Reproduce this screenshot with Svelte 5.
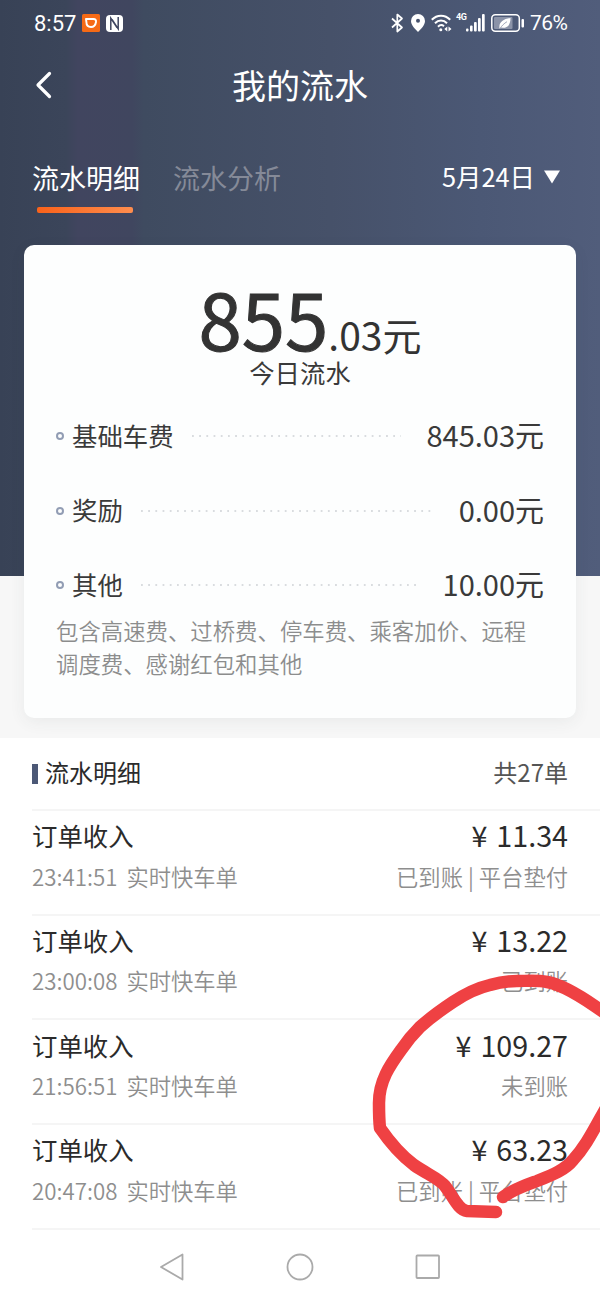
<script>
  const fees = [
    { name: '基础车费', value: '845.03元' },
    { name: '奖励', value: '0.00元' },
    { name: '其他', value: '10.00元' }
  ];

  const orders = [
    { time: '23:41:51', amount: '11.34', status: '已到账 | 平台垫付' },
    { time: '23:00:08', amount: '13.22', status: '已到账' },
    { time: '21:56:51', amount: '109.27', status: '未到账' },
    { time: '20:47:08', amount: '63.23', status: '已到账 | 平台垫付' }
  ];
</script>

<div class="page">
  <div class="hero">
    <div class="statusbar">
      <span class="clock">8:57</span>
      <svg class="didi" width="18" height="18" viewBox="0 0 18 18">
        <rect width="18" height="18" rx="1.5" fill="#f66a16" />
        <path d="M4 5h7.500c2 0 2.800 1.200 2.500 3-.5 3-2.300 5-5 5s-4.600-2-4.600-5z" fill="none" stroke="#fff" stroke-width="1.900" stroke-linejoin="round" />
      </svg>
      <svg class="nfc" width="17" height="17" viewBox="0 0 17 17">
        <rect width="17" height="17" rx="4" fill="#fff" />
        <path d="M4.800 15V3.200L11 12.500M12.200 2v11.800L6 4.500" fill="none" stroke="#3f4560" stroke-width="1.500" />
      </svg>
      <div class="right">
        <svg width="13" height="20" viewBox="0 0 13 20" fill="none" stroke="#fff" stroke-width="1.700" stroke-linejoin="round">
          <path d="M1 5.500l10 9L6.300 18.500V1.500L11 5.500l-10 9" />
        </svg>
        <svg class="pin" width="14" height="18" viewBox="0 0 14 18">
          <path d="M7 0a7 7 0 0 1 7 7c0 4-4 8-7 11C4 15 0 11 0 7a7 7 0 0 1 7-7z" fill="#fff" />
          <circle cx="7" cy="6.700" r="2" fill="#47526d" />
        </svg>
        <svg class="wifi" width="21" height="18" viewBox="0 0 21 18" fill="none" stroke="#fff" stroke-width="2">
          <path d="M.8 5.800c5.200-5.500 13.200-5.500 18.400 0M4 9.300c3.500-3.600 8.500-3.600 12 0M7 12.700c2-2 4.200-2 6-.5" />
          <circle cx="9.800" cy="15.800" r="1.500" fill="#fff" stroke="none" />
          <path d="M16.300 12.500v5l-3-2.500zM17.500 12.500v5l3-2.500z" fill="#fff" stroke="none" />
        </svg>
        <span class="net">4G</span>
        <svg class="signal" width="19" height="18" viewBox="0 0 19 18" fill="#fff">
          <rect x="0" y="14.500" width="2.500" height="3" rx="1" />
          <rect x="4" y="11.500" width="2.600" height="6" rx="1" />
          <rect x="8" y="8" width="2.700" height="9.500" rx="1" />
          <rect x="12" y="4" width="2.700" height="13.500" rx="1" />
          <rect x="16" y="0" width="2.700" height="17.500" rx="1" />
        </svg>
        <svg class="battery" width="34" height="18" viewBox="0 0 34 18">
          <rect x=".8" y=".8" width="27.500" height="16.400" rx="3.500" fill="none" stroke="#fff" stroke-width="1.500" />
          <rect x="3" y="3" width="18.500" height="12" rx="1" fill="#8b93a8" />
          <path d="M8.500 14.500c-1-6 3.500-9.500 11-10.500 0 6-2.500 11-9 9.500z" fill="#fff" />
          <path d="M9 14.500c2-3 4-5 7-6.800" fill="none" stroke="#8b93a8" stroke-width=".8" />
          <rect x="30.500" y="5" width="2.500" height="8.500" rx="1" fill="#fff" />
        </svg>
        <span class="percent">76%</span>
      </div>
    </div>

    <header>
      <svg class="back" width="18" height="28" viewBox="0 0 18 28">
        <path d="M15.500 2.500L4 14l11.500 11.500" fill="none" stroke="#fff" stroke-width="3.200" stroke-linecap="round" stroke-linejoin="round" />
      </svg>
      <h1>我的流水</h1>
    </header>

    <nav class="tabs">
      <div class="tab active">流水明细</div>
      <div class="tab">流水分析</div>
      <div class="date">
        <span>5月24日</span>
        <svg width="18" height="14" viewBox="0 0 18 14"><path d="M1 .5h16L9 13.500z" fill="#fff" /></svg>
      </div>
    </nav>

    <section class="card">
      <div class="total"><span class="big">855</span><span class="small">.03元</span></div>
      <div class="caption">今日流水</div>
      {#each fees as fee}
        <div class="fee">
          <i class="ring"></i>
          <span class="fee-name">{fee.name}</span>
          <span class="dots"></span>
          <span class="fee-value">{fee.value}</span>
        </div>
      {/each}
      <p>包含高速费、过桥费、停车费、乘客加价、远程<br />调度费、感谢红包和其他</p>
    </section>
  </div>

  <section class="list">
    <div class="list-head">
      <i class="mark"></i>
      <span class="list-title">流水明细</span>
      <span class="count">共27单</span>
    </div>
    {#each orders as order}
      <div class="order">
        <div class="line main">
          <span>订单收入</span>
          <span class="amount">¥ {order.amount}</span>
        </div>
        <div class="line sub">
          <span class="time">{order.time} 实时快车单</span>
          <span>{order.status}</span>
        </div>
      </div>
    {/each}
  </section>

  <footer>
    <svg width="26" height="28" viewBox="0 0 26 28"><path d="M23.500 1.500v25L2 14z" /></svg>
    <svg width="28" height="28" viewBox="0 0 28 28"><circle cx="14" cy="14" r="12.500" /></svg>
    <svg width="26" height="28" viewBox="0 0 26 28"><rect x="1.500" y="2.500" width="22.500" height="22.500" rx=".8" /></svg>
  </footer>

  <!-- hand-drawn mark around the unpaid order -->
  <svg class="scribble" width="240" height="270" viewBox="0 0 240 270">
    <path d="M143 237C154 229 166 225 177 221C192 215 205 210 213 200C226 186 233 171 246 148" />
    <path d="M136 252L107 251C98 250 93 236 85 226C80 219 67 214 54 205C42 196 31 184 20 168C19 160 19 150 19 143C19 121 30 105 41 90C47 81 53 74 60 67C70 58 81 50 93 42C105 34 117 28 130 25C140 22 149 21 157 21C167 21 177 20 187 22C199 24 216 32 246 54" />
  </svg>
</div>

<style>
  :global(body) {
    background: #fff;
  }

  .page {
    position: relative;
    width: 600px;
    height: 1299px;
    overflow: hidden;
    display: flex;
    flex-direction: column;
    font-family: 'Noto Sans CJK SC', sans-serif;
    color: #2b2b2b;
    white-space: nowrap;
  }

  .hero {
    height: 738px;
    flex: none;
    box-sizing: border-box;
    color: #fff;
    background:
      linear-gradient(90deg, #384256 0, #3b455a 11%, #41455f 13%, #40465f 22%, #3f4b60 24%, #465169 55%, #4b5875 80%, #515d7b 100%) no-repeat 0 0 / 100% 576px,
      #f7f7f7;
  }

  .statusbar {
    height: 46px;
    display: flex;
    align-items: center;
    padding: 0 32px 0 34px;
    font-family: Roboto, sans-serif;
  }

  .clock {
    width: 48px;
    font-size: 22px;
  }

  .nfc {
    margin-left: 6px;
  }

  .right {
    display: flex;
    align-items: center;
    margin-left: auto;
  }

  .pin {
    margin-left: 7px;
  }

  .wifi {
    margin-left: 6px;
  }

  .net {
    align-self: flex-start;
    margin: 2px 0 0 4px;
    width: 10px;
    font-size: 9px;
    font-weight: 700;
    line-height: 9px;
    letter-spacing: -0.5px;
  }

  .battery {
    margin-left: 6px;
  }

  .percent {
    margin-left: 5px;
    width: 38px;
    font-size: 21px;
    letter-spacing: -0.6px;
  }

  header {
    height: 78px;
    display: grid;
    grid-template-columns: 68px 1fr 68px;
    align-items: center;
  }

  .back {
    margin-left: 34px;
  }

  h1 {
    margin: 0;
    font-size: 34px;
    line-height: 50px;
    font-weight: 400;
    text-align: center;
  }

  .tabs {
    height: 121px;
    box-sizing: border-box;
    display: flex;
    align-items: flex-start;
    padding: 34px 39px 0 32px;
  }

  .tab {
    width: 108px;
    margin-right: 33px;
    font-size: 27px;
    line-height: 40px;
    color: #858a98;
  }

  .active {
    color: #fff;
  }

  .active::after {
    content: '';
    display: block;
    width: 96px;
    height: 6px;
    margin: 9px 0 0 5px;
    border-radius: 2px;
    background: linear-gradient(90deg, #f9621a, #ff8d4e);
  }

  .date {
    margin-left: auto;
    display: flex;
    align-items: center;
    gap: 8px;
    font-size: 25.400px;
    line-height: 36px;
  }

  .date svg {
    margin-top: 2px;
  }

  .card {
    height: 473px;
    box-sizing: border-box;
    margin: 0 24px;
    padding: 31px 32px 0;
    border-radius: 10px;
    background: #fdfefe;
    color: #3a3a3a;
    box-shadow: 0 4px 16px rgba(60, 66, 70, 0.07);
  }

  .total {
    height: 82px;
    line-height: 82px;
    padding-left: 20px;
    text-align: center;
    color: #333;
  }

  .big {
    font-size: 78px;
    -webkit-text-stroke: 1px #333;
  }

  .small {
    font-size: 39px;
  }

  .caption {
    height: 41px;
    line-height: 28px;
    font-size: 25.400px;
    text-align: center;
  }

  .fee {
    height: 74.500px;
    display: flex;
    align-items: center;
  }

  .ring {
    width: 4px;
    height: 4px;
    border: 2px solid #929db4;
    border-radius: 50%;
    margin-right: 8px;
  }

  .fee-name {
    font-size: 25.400px;
    margin-top: -3px;
  }

  .dots {
    flex: 1;
    height: 2px;
    margin: 0 25px 0 18px;
    background: radial-gradient(circle at 1px 1px, #d9dcdf 1px, transparent 1.300px) 0 0 / 7.200px 2px;
  }

  .fee-value {
    font-size: 29px;
    margin-top: -4px;
  }

  p {
    margin: -9px 0 0;
    font-size: 22.400px;
    line-height: 33.500px;
    font-weight: 350;
    color: #8c8d8d;
  }

  .list {
    padding-left: 32px;
    flex: none;
  }

  .list-head {
    height: 71px;
    display: flex;
    align-items: center;
    padding-right: 32px;
    font-size: 24px;
    border-bottom: 2px solid #f5f5f5;
  }

  .list-title,
  .count {
    margin-top: -4px;
  }

  .mark {
    width: 6px;
    height: 20px;
    margin-right: 7px;
    background: #4c5876;
  }

  .count {
    margin-left: auto;
    color: #555;
  }

  .order {
    height: 104.700px;
    box-sizing: border-box;
    padding: 4px 32px 0 0;
    border-bottom: 2px solid #f5f5f5;
  }

  .line {
    display: flex;
    justify-content: space-between;
    align-items: center;
    height: 40.500px;
  }

  .main {
    font-size: 25.400px;
    line-height: 40px;
  }

  .amount {
    font-size: 28.700px;
    word-spacing: 2.500px;
  }

  .sub {
    font-size: 22.300px;
    line-height: 40px;
    font-weight: 350;
    color: #8e8e8e;
  }

  .time {
    word-spacing: 4px;
  }

  footer {
    flex: 1;
    display: flex;
    justify-content: center;
    align-items: center;
    gap: 101px;
    padding-top: 6px;
  }

  footer path,
  footer circle,
  footer rect {
    fill: none;
    stroke: #aaa;
    stroke-width: 1.800;
    stroke-linejoin: round;
  }

  .scribble {
    position: absolute;
    left: 360px;
    top: 960px;
  }

  .scribble path {
    fill: none;
    stroke: #ef4143;
    stroke-width: 12.500;
    stroke-linecap: round;
    stroke-linejoin: round;
  }
</style>
